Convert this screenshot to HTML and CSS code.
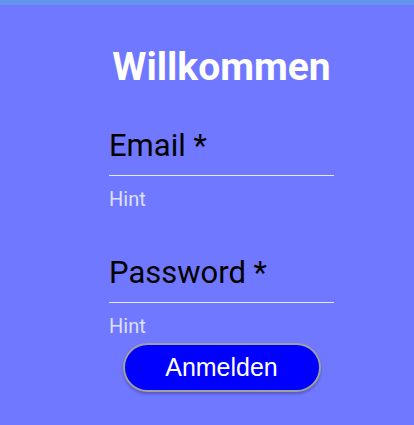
FILE: index.html
```html
<!DOCTYPE html>
<html lang="de">
<head>
    <meta charset="UTF-8">
    <meta name="viewport" content="width=device-width, initial-scale=1.0">
    <title>Willkommen</title>
    <link rel="stylesheet" href="styles.css">
</head>
<body>

<div class="topbar"></div>

<div class="page">
    <form class="login">
        <h1 class="title">Willkommen</h1>

        <div class="field">
            <label for="email">Email *</label>
            <input type="email" id="email" required>
            <span class="hint">Hint</span>
        </div>

        <div class="field">
            <label for="password">Password *</label>
            <input type="password" id="password" required>
            <span class="hint">Hint</span>
        </div>

        <button type="submit" class="btn">Anmelden</button>
    </form>
</div>

</body>
</html>
```

FILE: styles.css
```css
html, body {
    margin: 0;
    padding: 0;
    height: 100%;
}

body {
    font-family: Roboto, "Noto Sans", sans-serif;
    background-color: #7078ff;
    display: flex;
    flex-direction: column;
}

.topbar {
    height: 5px;
    background-color: #6495ed;
}

.page {
    flex: 1;
    display: flex;
    justify-content: center;
    padding-left: 29px;
}

.login {
    width: 225px;
    display: flex;
    flex-direction: column;
    padding-top: 40px;
}

.title {
    margin: 0 -20px 39px;
    text-align: center;
    color: #ffffff;
    font-weight: 700;
    font-size: 39px;
    line-height: 44px;
}

.field {
    display: flex;
    flex-direction: column;
    margin-bottom: 44px;
}

.field label {
    color: #000000;
    font-size: 31px;
    line-height: 36px;
}

.field input {
    border: none;
    border-bottom: 1px solid #e6e8ff;
    background: transparent;
    height: 11px;
    padding: 0;
    outline: none;
}

.hint {
    color: #dde1ff;
    font-size: 20px;
    line-height: 24px;
    margin-top: 11px;
}

.field:last-of-type {
    margin-bottom: 0;
}

.btn {
    align-self: center;
    width: 198px;
    height: 49px;
    margin-top: 5px;
    border: 2px solid #a0a0a0;
    border-radius: 25px;
    background-color: #0000ff;
    color: #ffffff;
    font-family: "Liberation Sans", Arial, sans-serif;
    font-size: 25px;
    box-shadow: 0 2px 3px rgba(0, 0, 0, 0.25);
    cursor: pointer;
}
```
